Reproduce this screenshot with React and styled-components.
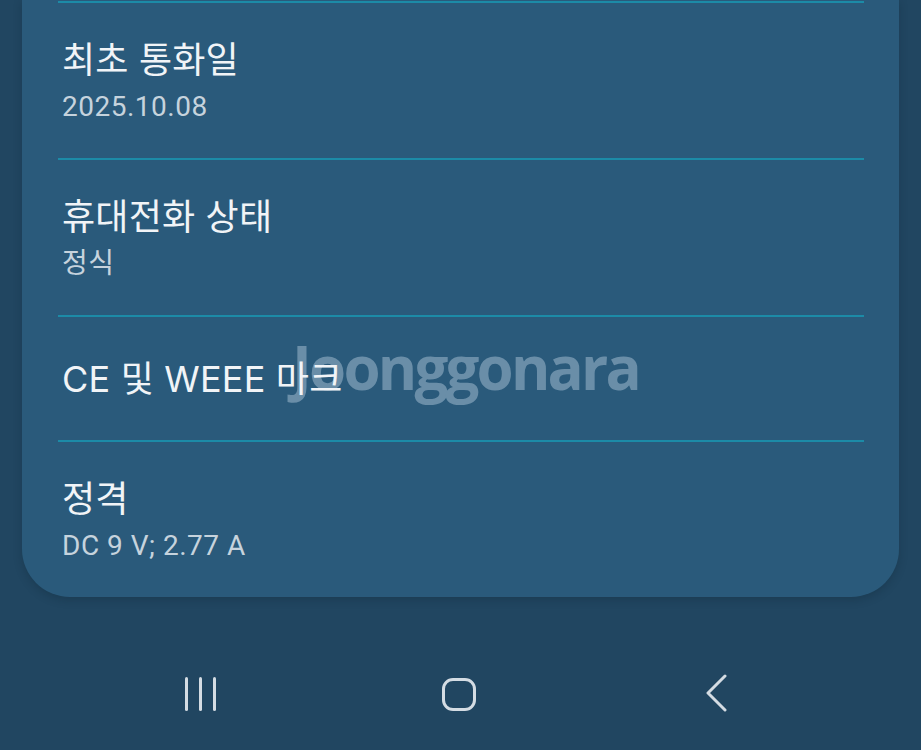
import React from 'react';
import styled, { createGlobalStyle } from 'styled-components';

const GlobalStyle = createGlobalStyle`
  html, body {
    margin: 0;
    padding: 0;
    background: #214661;
  }
  body {
    font-family: "Roboto", "Noto Sans CJK KR", sans-serif;
    -webkit-font-smoothing: antialiased;
  }
`;

const Screen = styled.div`
  width: 921px;
  height: 750px;
  overflow: hidden;
  background: #214661;
  display: flex;
  flex-direction: column;
`;

const Card = styled.div`
  position: relative;
  margin: 0 22px;
  padding: 1px 35px 0 36px;
  background: #2a5a7b;
  border-radius: 0 0 48px 48px;
  box-shadow: 0 3px 8px rgba(10, 30, 45, 0.25);
`;

const Divider = styled.div`
  height: 2px;
  background: #1c8ba7;
`;

const Item = styled.div`
  display: flex;
  flex-direction: column;
  gap: 7px;
  padding: ${props => (props.single ? '40px 4px 39px' : '35px 4px 33px')};
`;

const Title = styled.div`
  position: relative;
  z-index: 1;
  font-family: "Inter", "Noto Sans CJK KR", sans-serif;
  font-size: 36px;
  line-height: 44px;
  letter-spacing: 0.2px;
  color: #f1f4f7;
`;

const Sub = styled.div`
  font-size: 28px;
  line-height: 36px;
  letter-spacing: 0.5px;
  color: #c6d3dd;
`;

const Watermark = styled.div`
  position: absolute;
  left: 270px;
  top: 326px;
  z-index: 0;
  font-family: "Open Sans", sans-serif;
  font-weight: 700;
  font-size: 60px;
  letter-spacing: -2.8px;
  color: #6a8ea8;
  pointer-events: none;
`;

const NavBar = styled.div`
  display: flex;
  justify-content: center;
  padding-top: 79px;
  margin-left: -4px;
`;

const NavCell = styled.div`
  width: 258px;
  height: 36px;
  display: flex;
  justify-content: center;
  align-items: center;
`;

const Bars = styled.div`
  display: flex;
  gap: 11px;
`;

const Bar = styled.span`
  width: 3px;
  height: 34px;
  border-radius: 2px;
  background: #d4dce3;
`;

const HomeKey = styled.span`
  width: 28px;
  height: 27px;
  border: 3px solid #d4dce3;
  border-radius: 11px;
`;

const items = [
  { title: '최초 통화일', sub: '2025.10.08' },
  { title: '휴대전화 상태', sub: '정식' },
  { title: 'CE 및 WEEE 마크' },
  { title: '정격', sub: 'DC 9 V; 2.77 A' },
];

export default function App() {
  return (
    <Screen>
      <GlobalStyle />
      <Card>
        {items.map(it => (
          <React.Fragment key={it.title}>
            <Divider />
            <Item single={!it.sub}>
              <Title>{it.title}</Title>
              {it.sub && <Sub>{it.sub}</Sub>}
            </Item>
          </React.Fragment>
        ))}
        <Watermark>Joonggonara</Watermark>
      </Card>
      <NavBar>
        <NavCell>
          <Bars>
            <Bar />
            <Bar />
            <Bar />
          </Bars>
        </NavCell>
        <NavCell>
          <HomeKey />
        </NavCell>
        <NavCell>
          <svg width="24" height="40" viewBox="0 0 24 40">
            <path
              d="M20 2 L3 19 L20 36"
              fill="none"
              stroke="#d4dce3"
              strokeWidth="3"
              strokeLinecap="round"
              strokeLinejoin="round"
            />
          </svg>
        </NavCell>
      </NavBar>
    </Screen>
  );
}
